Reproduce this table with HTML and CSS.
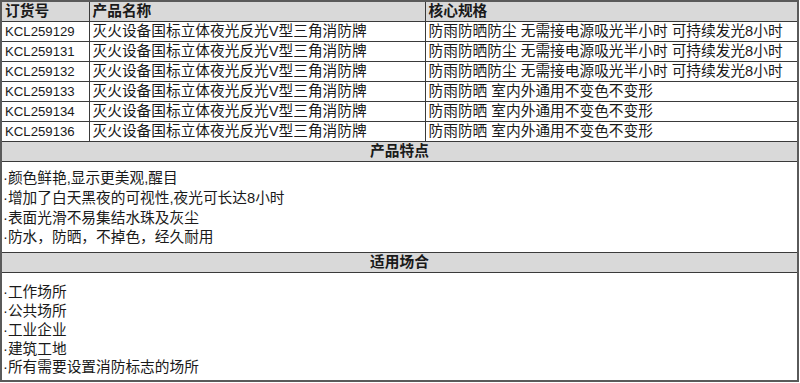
FILE: index.html
```html
<!DOCTYPE html>
<html lang="zh-CN">
<head>
<meta charset="utf-8">
<link rel="stylesheet" href="styles.css">
</head>
<body>
<table class="spec">
  <colgroup>
    <col class="c1">
    <col class="c2">
    <col class="c3">
  </colgroup>
  <tr class="head">
    <th>订货号</th>
    <th>产品名称</th>
    <th>核心规格</th>
  </tr>
  <tr><td class="code">KCL259129</td><td>灭火设备国标立体夜光反光V型三角消防牌</td><td>防雨防晒防尘 无需接电源吸光半小时 可持续发光8小时</td></tr>
  <tr><td class="code">KCL259131</td><td>灭火设备国标立体夜光反光V型三角消防牌</td><td>防雨防晒防尘 无需接电源吸光半小时 可持续发光8小时</td></tr>
  <tr><td class="code">KCL259132</td><td>灭火设备国标立体夜光反光V型三角消防牌</td><td>防雨防晒防尘 无需接电源吸光半小时 可持续发光8小时</td></tr>
  <tr><td class="code">KCL259133</td><td>灭火设备国标立体夜光反光V型三角消防牌</td><td>防雨防晒 室内外通用不变色不变形</td></tr>
  <tr><td class="code">KCL259134</td><td>灭火设备国标立体夜光反光V型三角消防牌</td><td>防雨防晒 室内外通用不变色不变形</td></tr>
  <tr><td class="code">KCL259136</td><td>灭火设备国标立体夜光反光V型三角消防牌</td><td>防雨防晒 室内外通用不变色不变形</td></tr>
  <tr class="head section"><th colspan="3">产品特点</th></tr>
  <tr class="body-row">
    <td colspan="3" class="list list-a">
      <div>·颜色鲜艳,显示更美观,醒目</div>
      <div>·增加了白天黑夜的可视性,夜光可长达8小时</div>
      <div>·表面光滑不易集结水珠及灰尘</div>
      <div>·防水，防晒，不掉色，经久耐用</div>
    </td>
  </tr>
  <tr class="head section"><th colspan="3">适用场合</th></tr>
  <tr class="body-row">
    <td colspan="3" class="list list-b">
      <div>·工作场所</div>
      <div>·公共场所</div>
      <div>·工业企业</div>
      <div>·建筑工地</div>
      <div>·所有需要设置消防标志的场所</div>
    </td>
  </tr>
</table>
</body>
</html>
```
FILE: styles.css
```css
html, body {
  margin: 0;
  padding: 0;
  background: #ffffff;
}
body {
  font-family: "Liberation Sans", "Noto Sans CJK SC", sans-serif;
  font-size: 14.7px;
  color: #1a1a1a;
}
.spec {
  border-collapse: collapse;
  width: 797px;
  table-layout: fixed;
  border: 2px solid #5a5a5a;
}
.c1 { width: 88px; }
.c2 { width: 336px; }
.c3 { width: 373px; }
.spec th,
.spec td {
  border: 1px solid #3a3a3a;
  padding: 0 3px;
  height: 19px;
  line-height: 19px;
  text-align: left;
  vertical-align: middle;
  white-space: nowrap;
  overflow: hidden;
}
.spec td.code {
  font-size: 13.2px;
}
.head th {
  background: #d9d9d9;
  font-weight: bold;
}
.section th {
  text-align: center;
}
.spec td.list {
  padding: 7px 1px 4px;
  height: auto;
}
.list-a div {
  line-height: 19.8px;
}
.list-b div {
  line-height: 18.8px;
}
.spec td.list-b {
  padding-top: 10px;
  padding-bottom: 3px;
}
```
